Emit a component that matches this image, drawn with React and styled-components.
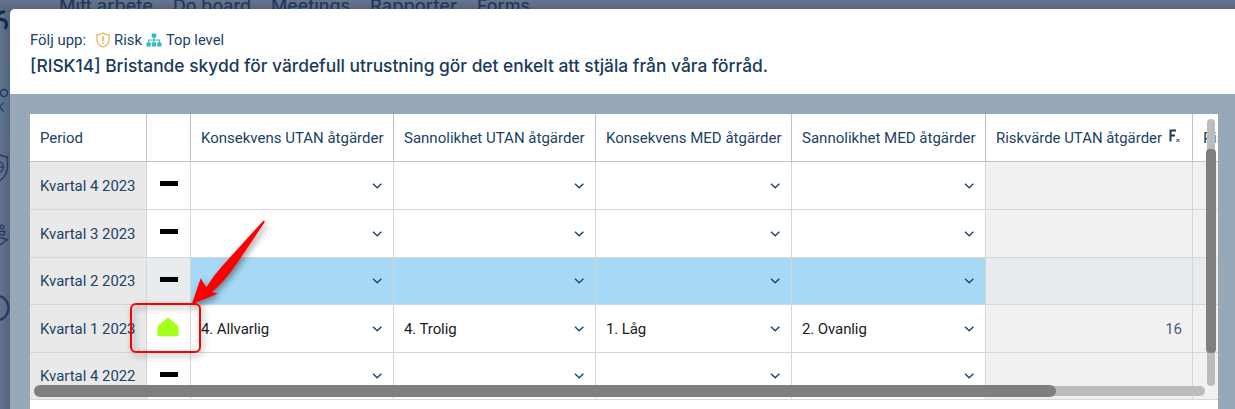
import React from 'react'
import styled, { createGlobalStyle } from 'styled-components'

const rows = [
  { period: 'Kvartal 4 2023', h: 48 },
  { period: 'Kvartal 3 2023', h: 48 },
  { period: 'Kvartal 2 2023', h: 47, selected: true },
  { period: 'Kvartal 1 2023', h: 48, status: 'up', values: ['4. Allvarlig', '4. Trolig', '1. Låg', '2. Ovanlig'], risk: '16' },
  { period: 'Kvartal 4 2022', h: 47 },
]

const headers = [
  { label: 'Konsekvens UTAN åtgärder', w: 182.5 },
  { label: 'Sannolikhet UTAN åtgärder', w: 180.5 },
  { label: 'Konsekvens MED åtgärder', w: 175.5 },
  { label: 'Sannolikhet MED åtgärder', w: 173.5 },
]

const menu = [
  { label: 'Mitt arbete', w: 94 },
  { label: 'Do board', w: 78 },
  { label: 'Meetings', w: 79 },
  { label: 'Rapporter', w: 87 },
  { label: 'Forms', w: 53 },
]

// text with a fixed advance width
const Fit = ({ w, y = 16, children }) => (
  <svg width={w} height="22" overflow="visible">
    <text x="0" y={y} textLength={w} lengthAdjust="spacingAndGlyphs" fill="currentColor">{children}</text>
  </svg>
)

const Chevron = () => (
  <svg width="11" height="8" viewBox="0 0 11 8" fill="none" stroke="#1f4a70" strokeWidth="1.5">
    <path d="M1 1.800 5.200 5.800 9.400 1.800" />
  </svg>
)

const ShieldIcon = () => (
  <svg width="14" height="16" viewBox="0 0 14 16" fill="none" stroke="#f0ad4e" strokeWidth="1.2">
    <path d="M7 .9C5.3 2 3.2 2.6.9 2.8v4.4C.9 11.3 3.3 13.7 7 15c3.7-1.3 6.1-3.7 6.1-7.8V2.800C10.800 2.600 8.700 2 7 .9Z" />
    <path d="M7 4.300v4.600M7 10.200v1.500" strokeWidth="1.500" />
  </svg>
)

const TreeIcon = () => (
  <svg width="16" height="14" viewBox="0 0 16 14" fill="#35b8bd">
    <path d="M5.700.5h4.600v4H5.700zM.5 9.500h4.300v4H.5zM5.800 9.500h4.400v4H5.800zM11.200 9.500h4.300v4h-4.300z" />
    <path d="M2.700 10V7h10.600v3M8 4v6" fill="none" stroke="#35b8bd" strokeWidth="1.200" />
  </svg>
)

const House = () => (
  <svg width="22" height="20" viewBox="0 0 22 20" fill="#a4ff1a">
    <path d="M11 .5 21.500 9v9.500q0 .8-.8.800H1.300q-.8 0-.8-.800V9Z" />
  </svg>
)

const Fx = () => (
  <svg width="13" height="18" viewBox="0 0 13 18" fill="none" stroke="#1a3a5c">
    <path d="M2.500 12.500V1.500H8M2.500 6.500H7" strokeWidth="2" />
    <path d="m8.300 9.800 3.200 3.200M11.500 9.800 8.300 13" strokeWidth="1" />
  </svg>
)

const SideDrawing = () => (
  <svg width="10" height="400" viewBox="0 9 10 400" fill="none" stroke="#203a60" strokeWidth="1.300">
    <path d="M-1 14Q2 11 5 12.200M-2 19.500q8.500-.5 8.500 5 0 2.500-1.500 4.500" stroke="#142c50" strokeWidth="3.200" />
    <circle cx="4" cy="93" r="3.500" />
    <path d="M3.500 102.500-.5 107 3.500 111.500" />
    <path d="M-2 154q4 2.500 9.500 3v9.500q0 9-8.500 15" />
    <circle cx="-2" cy="167" r="5.500" />
    <path d="M-4 167H3.500" />
    <circle cx="2" cy="227" r="1.900" />
    <path d="M0 231.500H5l-1 4-4-1M0 237.500 7.500 239.500 0 245" />
    <circle cx="-4" cy="308" r="12.500" strokeWidth="2.300" />
  </svg>
)

const Arrow = () => (
  <ArrowSvg width="110" height="110" viewBox="0 0 110 110">
    <path d="M11.700 84.500 20.700 58.300 26.300 67.200Q34 55 42 46.200L83.300.8Q84.500.7 84.800 2L55.500 45.500Q44 62 31.800 72L37.900 73.400Z" fill="#fe0000" />
  </ArrowSvg>
)

const App = () => {
  return (
    <Page>
      <GlobalStyle />
      <TopBar>
        {menu.map((m) => (
          <Fit key={m.label} w={m.w} y={12}>{m.label}</Fit>
        ))}
      </TopBar>
      <Shell>
        <Sidebar>
          <SideDrawing />
        </Sidebar>
        <Modal>
          <ModalHeader>
            <Crumbs>
              <Fit w={56}>Följ upp:</Fit>
              <ShieldIcon />
              <Fit w={28}>Risk</Fit>
              <TreeIcon />
              <Fit w={58}>Top level</Fit>
            </Crumbs>
            <Title>
              <Fit w={738} y={17}>[RISK14] Bristande skydd för värdefull utrustning gör det enkelt att stjäla från våra förråd.</Fit>
            </Title>
          </ModalHeader>
          <ModalBody>
            <TablePanel>
              <Row $h={48}>
                <HeadCell><Fit w={43}>Period</Fit></HeadCell>
                <HeadCell />
                {headers.map((h) => (
                  <HeadCell key={h.label}><Fit w={h.w}>{h.label}</Fit></HeadCell>
                ))}
                <HeadCell>
                  <Fit w={166}>Riskvärde UTAN åtgärder</Fit>
                  <Fx />
                </HeadCell>
                <HeadCell $last><Fit w={22}>Ris</Fit></HeadCell>
              </Row>
              {rows.map((r) => (
                <Row key={r.period} $h={r.h}>
                  <PeriodCell><Fit w={95.5}>{r.period}</Fit></PeriodCell>
                  <StatusCell $selected={r.selected}>
                    {r.status ? <House /> : <Dash />}
                    {r.status && <Callout />}
                  </StatusCell>
                  {headers.map((h, i) => (
                    <SelectCell key={h.label} $selected={r.selected}>
                      <span>{r.values ? r.values[i] : ''}</span>
                      <Chevron />
                    </SelectCell>
                  ))}
                  <RiskCell $selected={r.selected}>{r.risk}</RiskCell>
                  <RiskCell $selected={r.selected} $last />
                </Row>
              ))}
              <VTrack><VThumb /></VTrack>
              <HTrack><HThumb /></HTrack>
              <Arrow />
            </TablePanel>
          </ModalBody>
        </Modal>
      </Shell>
    </Page>
  )
}

const GlobalStyle = createGlobalStyle`
  *{
    box-sizing: border-box;
  }
  body{
    margin: 0;
    overflow: hidden;
    font-family: Roboto, "Liberation Sans", sans-serif;
    font-size: 15px;
    color: #204264;
  }
  svg{
    flex: none;
    display: block;
  }
`
const Page = styled.div`
  height: 409px;
  overflow: hidden;
  background: #5f6d86;
`
const TopBar = styled.div`
  height: 9px;
  padding-left: 59px;
  display: flex;
  gap: 20px;
  align-items: flex-start;
  font-family: Inter, sans-serif;
  font-size: 17px;
  font-weight: 500;
  color: #1d3960;
  overflow: hidden;
  background: linear-gradient(#66748d, #58667f);
`
const Shell = styled.div`
  display: flex;
  height: 400px;
`
const Sidebar = styled.div`
  width: 10px;
  flex: none;
  background:
    linear-gradient(to right, rgba(255, 255, 255, 0.04), rgba(20, 30, 60, 0.14)),
    linear-gradient(#5f6d86 54px, #586f88 54px, #586f88 124px, #5f6d86 124px);
`
const Modal = styled.div`
  flex: 1;
  min-width: 0;
  border-top-left-radius: 5px;
  overflow: hidden;
  background: #97a9b8;
`
const ModalHeader = styled.div`
  height: 85px;
  padding: 20px 20px 0;
  background: #fff;
`
const Crumbs = styled.div`
  display: flex;
  align-items: center;
  height: 22px;
  gap: 4px;

  svg:first-child{
    margin-right: 6px;
  }
`
const Title = styled.div`
  margin-top: 4px;
  font-family: Inter, sans-serif;
  font-weight: 500;
  font-size: 17.5px;
  color: #1a3a5c;
`
const ModalBody = styled.div`
  padding: 20px 17px 0 20px;
`
const TablePanel = styled.div`
  position: relative;
  height: 295px;
  overflow: hidden;
  background: #fff;
`
const Row = styled.div`
  display: grid;
  grid-template-columns: 117px 44px 203px 202px 196px 194px 207px 25px;
  height: ${(p) => p.$h}px;
`
const Cell = styled.div`
  display: flex;
  align-items: center;
  min-width: 0;
  padding: 0 10px;
  border-right: ${(p) => (p.$last ? 0 : 1)}px solid #d6d6d6;
  border-bottom: 1px solid #d6d6d6;
`
const HeadCell = styled(Cell)`
  gap: 6px;
  overflow: hidden;
  border-color: #bac3cb;
`
const PeriodCell = styled(Cell)`
  background: #e9e9e9;
`
const StatusCell = styled(Cell)`
  position: relative;
  justify-content: center;
  padding: 0;
  background: ${(p) => (p.$selected ? '#e8ecef' : '#fff')};

  svg{
    margin: 0 1px 3px 0;
  }
`
const SelectCell = styled(Cell)`
  justify-content: space-between;
  letter-spacing: -0.1px;
  color: #1c1c1c;
  background: ${(p) => (p.$selected ? '#a6d9f6' : '#fff')};
`
const RiskCell = styled(Cell)`
  justify-content: flex-end;
  color: #48617b;
  background: ${(p) => (p.$selected ? '#e8ecef' : '#f1f1f1')};
`
const Dash = styled.i`
  width: 18px;
  height: 5px;
  margin-bottom: 4px;
  background: #000;
`
const Callout = styled.div`
  position: absolute;
  left: -17px;
  top: -2px;
  z-index: 1;
  width: 71px;
  height: 50px;
  border: 2px solid #f00;
  border-radius: 6px;
  filter: drop-shadow(2px 3px 3px rgba(0, 0, 0, 0.4));
`
const ArrowSvg = styled.svg`
  position: absolute;
  left: 150px;
  top: 106px;
  filter: drop-shadow(2px 3px 3px rgba(0, 0, 0, 0.4));
`
const VTrack = styled.div`
  position: absolute;
  left: 1177px;
  top: 5px;
  width: 8px;
  height: 267px;
  border-radius: 4px;
  background: #bcbcbc;
`
const VThumb = styled.div`
  position: relative;
  top: 30px;
  width: 10px;
  height: 204px;
  margin-left: -1px;
  border-radius: 4px;
  background: #7f7f7f;
`
const HTrack = styled.div`
  position: absolute;
  left: 4px;
  top: 272px;
  width: 1171px;
  height: 10px;
  border-radius: 5px;
  background: #bcbcbc;
`
const HThumb = styled.div`
  width: 1022px;
  height: 12px;
  margin-top: -1px;
  border-radius: 6px;
  background: #7f7f7f;
`

export default App
